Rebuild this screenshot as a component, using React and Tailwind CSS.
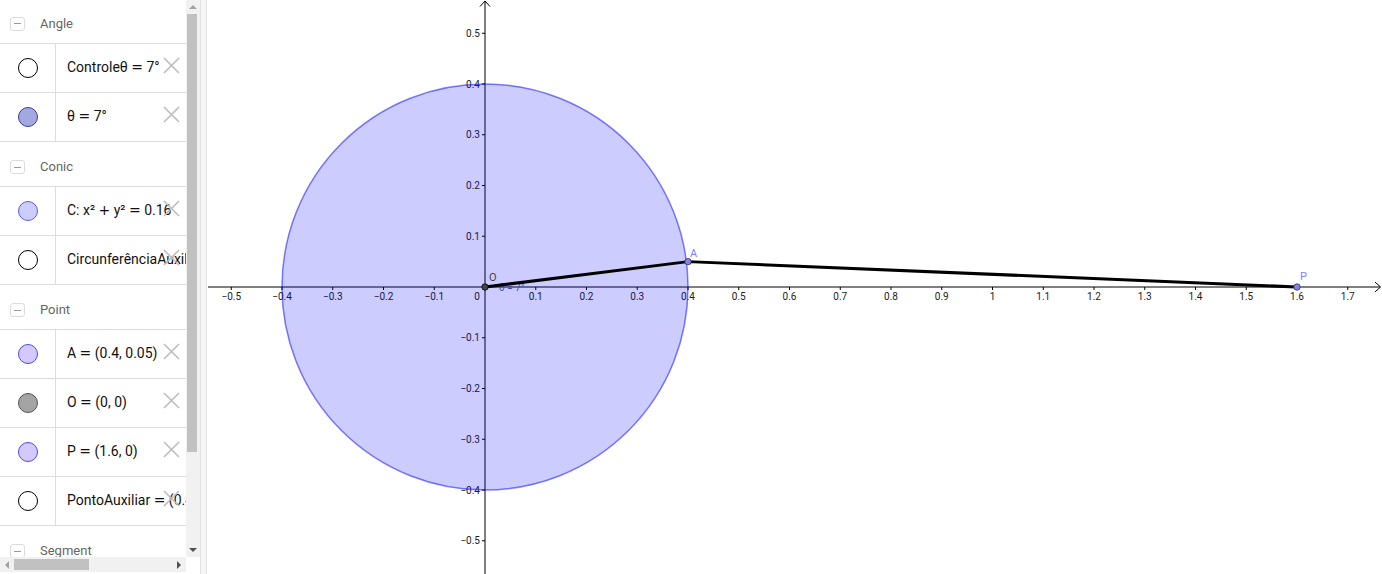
import React from "react";

const OX = 485;
const OY = 287;
const U = 507.5;

function fmt(k) {
  const v = Math.abs(k) / 10;
  const s = Number.isInteger(v) ? String(v) : v.toFixed(1);
  return k < 0 ? "\u2212" + s : s;
}

// "=" and "+" are drawn wider in the algebra view, like a math font
function MathText({ text }) {
  const parts = text.split(/([=+])/);
  return parts.map((p, i) =>
    p === "=" || p === "+" ? (
      <span key={i} className="font-['DejaVu_Sans'] text-[14px]">{p}</span>
    ) : (
      <span key={i}>{p}</span>
    )
  );
}

function Header({ label, first }) {
  return (
    <div className={`flex items-center gap-[15px] pl-[10px] border-b border-[#dddddd] shrink-0 ${first ? "h-[44px] pt-[4px]" : "h-[45px] pt-[6px]"}`}>
      <div className="w-[15px] h-[14px] rounded-[3px] border border-[#dcdcdc] flex items-center justify-center">
        <div className="w-[7px] h-[1px] bg-[#9a9a9a]" />
      </div>
      <span className="text-[13px] text-[#666666]">{label}</span>
    </div>
  );
}

function Item({ text, fill, border }) {
  return (
    <div className="flex h-[49px] border-b border-[#dddddd] shrink-0">
      <div className="w-[56px] shrink-0 border-r border-[#dddddd] flex items-center justify-center">
        <div className="w-[20px] h-[20px] rounded-full border" style={{ background: fill, borderColor: border }} />
      </div>
      <div className="relative flex-1 flex items-center pl-[11px] pb-[2px] overflow-hidden">
        <span className="whitespace-nowrap text-[14px] text-[#111111]">
          <MathText text={text} />
        </span>
        <svg className="absolute left-[107px] top-[13px]" width="17" height="17" viewBox="0 0 17 17">
          <path d="M1 1 L16 16 M16 1 L1 16" stroke="#bdbdbd" strokeWidth="1.6" fill="none" />
        </svg>
      </div>
    </div>
  );
}

function Sidebar() {
  return (
    <div className="w-[200px] shrink-0 flex flex-col h-[574px]">
      <div className="flex h-[557px]">
        <div className="w-[186px] flex flex-col overflow-hidden">
          <Header label="Angle" first />
          <Item text="Controleθ = 7°" fill="#ffffff" border="#000000" />
          <Item text="θ = 7°" fill="#a3a9e0" border="#3c3c9c" />
          <Header label="Conic" />
          <Item text="C: x² + y² = 0.16" fill="#ccccff" border="#5a5ae6" />
          <Item text="CircunferênciaAuxiliar" fill="#ffffff" border="#000000" />
          <Header label="Point" />
          <Item text="A = (0.4, 0.05)" fill="#d4c8ff" border="#4d4dd6" />
          <Item text="O = (0, 0)" fill="#a4a4a4" border="#555555" />
          <Item text="P = (1.6, 0)" fill="#d4c8ff" border="#4d4dd6" />
          <Item text="PontoAuxiliar = (0.4, 0)" fill="#ffffff" border="#000000" />
          <Header label="Segment" />
        </div>
        <div className="w-[14px] flex flex-col bg-[#f1f1f1]">
          <div className="h-[14px] flex items-center justify-center">
            <div className="w-0 h-0 border-l-[4px] border-r-[4px] border-b-[4px] border-l-transparent border-r-transparent border-b-[#a3a3a3]" />
          </div>
          <div className="h-[438px] ml-[1px] w-[10px] bg-[#c1c1c1]" />
          <div className="flex-1" />
          <div className="h-[14px] flex items-center justify-center">
            <div className="w-0 h-0 border-l-[4px] border-r-[4px] border-t-[4px] border-l-transparent border-r-transparent border-t-[#505050]" />
          </div>
        </div>
      </div>
      <div className="flex h-[15px]">
        <div className="w-[186px] flex items-center bg-[#f1f1f1]">
          <div className="w-[14px] flex items-center justify-center">
            <div className="w-0 h-0 border-t-[4px] border-b-[4px] border-r-[4px] border-t-transparent border-b-transparent border-r-[#a3a3a3]" />
          </div>
          <div className="w-[75px] h-[11px] bg-[#c1c1c1]" />
          <div className="flex-1" />
          <div className="w-[14px] flex items-center justify-center">
            <div className="w-0 h-0 border-t-[4px] border-b-[4px] border-l-[4px] border-t-transparent border-b-transparent border-l-[#505050]" />
          </div>
        </div>
        <div className="w-[14px] bg-white" />
      </div>
    </div>
  );
}

function Graphics() {
  const xs = [];
  for (let k = -5; k <= 17; k++) if (k !== 0) xs.push(k);
  const ys = [];
  for (let k = -5; k <= 5; k++) if (k !== 0) ys.push(k);
  const A = [OX + 0.4 * U, OY - 0.05 * U];
  const P = [OX + 1.6 * U, OY];
  return (
    <div className="flex-1 h-[574px] bg-white">
      <svg width="1175" height="574" viewBox="207 0 1175 574" style={{ fontFamily: "Roboto, 'Liberation Sans', sans-serif" }}>
        {/* axes */}
        <line x1="208" y1={OY} x2="1380" y2={OY} stroke="#000" strokeWidth="1" />
        <path d="M1375 282 L1380.5 287 L1375 292" stroke="#000" fill="none" />
        <line x1={OX} y1="1" x2={OX} y2="574" stroke="#000" strokeWidth="1" />
        <path d="M480 6.5 L485 1 L490 6.5" stroke="#000" fill="none" />
        {xs.map((k) => {
          const x = OX + k * U / 10;
          return (
            <g key={"x" + k}>
              <line x1={x} y1={OY} x2={x} y2={OY + 3} stroke="#000" />
              <text x={x} y={OY + 13} fontSize="10" textAnchor="middle" fill="#222">{fmt(k)}</text>
            </g>
          );
        })}
        <text x={OX - 8} y={OY + 13} fontSize="10" textAnchor="middle" fill="#222">0</text>
        {ys.map((k) => {
          const y = OY - k * U / 10;
          return (
            <g key={"y" + k}>
              <line x1={OX - 3} y1={y} x2={OX} y2={y} stroke="#000" />
              <text x={OX - 5} y={y + 3.5} fontSize="10" textAnchor="end" fill="#222">{fmt(k)}</text>
            </g>
          );
        })}
        {/* conic */}
        <circle cx={OX} cy={OY} r={0.4 * U} fill="#0000ff" fillOpacity="0.2" stroke="#0000ff" strokeOpacity="0.5" strokeWidth="1.5" />
        <text x="499" y="291" fontSize="10" fill="#4a4ab0">θ = 7°</text>
        {/* segments */}
        <polyline points={`${OX},${OY} ${A[0]},${A[1]} ${P[0]},${P[1]}`} stroke="#000" strokeWidth="3" fill="none" strokeLinejoin="round" />
        {/* points */}
        <circle cx={OX} cy={OY} r="3.2" fill="#444" stroke="#000" strokeWidth="0.8" />
        <circle cx={A[0]} cy={A[1]} r="3.2" fill="#8080ff" stroke="#333" strokeWidth="0.8" />
        <circle cx={P[0]} cy={P[1]} r="3.2" fill="#8080ff" stroke="#333" strokeWidth="0.8" />
        <text x="489" y="281" fontSize="11" fill="#444">O</text>
        <text x="690" y="257" fontSize="11" fill="#7f7fff">A</text>
        <text x="1300" y="280" fontSize="11" fill="#7f7fff">P</text>
      </svg>
    </div>
  );
}

export default function App() {
  return (
    <div className="w-[1382px] h-[574px] flex overflow-hidden bg-white" style={{ fontFamily: "Roboto, 'Noto Sans', sans-serif" }}>
      <Sidebar />
      <div className="w-[7px] shrink-0 h-[574px] bg-[#f5f5f5] border-l border-r border-[#e2e2e2]" />
      <Graphics />
    </div>
  );
}
